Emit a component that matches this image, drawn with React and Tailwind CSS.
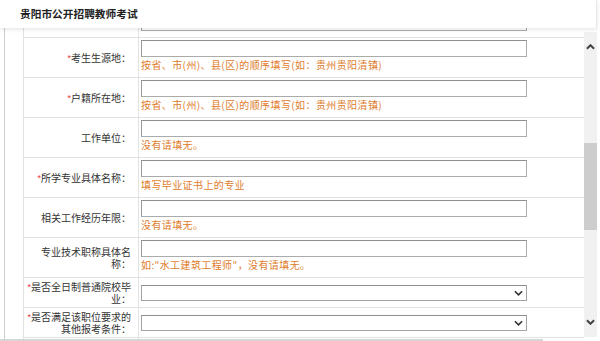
import React from 'react';

const hintArea = '按省、市(州)、县(区)的顺序填写(如：贵州贵阳清镇)';

const rows = [
  { label: '考生生源地：', req: true, hint: hintArea },
  { label: '户籍所在地：', req: true, hint: hintArea },
  { label: '工作单位：', hint: '没有请填无。' },
  { label: '所学专业具体名称：', req: true, hint: '填写毕业证书上的专业' },
  { label: '相关工作经历年限：', hint: '没有请填无。' },
  { label: '专业技术职称具体名称：', hint: '如:"水工建筑工程师"，没有请填无。' },
  { label: '是否全日制普通院校毕业：', req: true, select: true },
  { label: '是否满足该职位要求的其他报考条件：', req: true, select: true },
];

const Chevron = ({ up, className, sw = 1.6 }) => (
  <svg viewBox="0 0 10 6" className={className} fill="none" stroke="currentColor" strokeWidth={sw}>
    <path d={up ? 'M1 5 L5 1 L9 5' : 'M1 1 L5 5 L9 1'} />
  </svg>
);

const TextBox = () => (
  <div className="w-[386px] h-[17px] bg-white border border-[#ababab] border-t-[#8f8f8f] border-l-[#9a9a9a]" />
);

const SelectBox = () => (
  <div className="relative w-[386px] h-[16px] bg-white border border-[#a3a3a3] border-t-[#8f8f8f]">
    <Chevron sw={1.8} className="absolute right-[3px] top-[4px] w-[9px] h-[6px] text-[#333]" />
  </div>
);

const Row = ({ label, req, hint, select }) => (
  <div className={`flex border-b border-[#e2e2e2] ${select ? 'h-[30px]' : 'h-[40px]'}`}>
    <div className="w-[115px] shrink-0 border-r border-[#e2e2e2] flex items-center justify-end pr-[7px] pl-[1px]">
      <div className="text-right text-[10px] leading-[12px] text-[#333]">
        {req && <span className="text-[#e53333] font-['Liberation_Sans'] text-[9px] align-top">*</span>}
        {label}
      </div>
    </div>
    <div className={`flex-1 pl-[2px] flex flex-col ${select || !hint ? 'justify-center' : 'pt-[2px]'}`}>
      {select ? <SelectBox /> : <TextBox />}
      {hint && (
        <div className="mt-[1px] text-[10px] leading-[14px] tracking-[0.4px] text-[#e07c2c] whitespace-nowrap">{hint}</div>
      )}
    </div>
  </div>
);

export default function App() {
  return (
    <div className="w-[600px] h-[341px] bg-white overflow-hidden relative font-['Noto_Sans_CJK_SC',sans-serif]">
      <div className="relative z-10 h-[28px] flex items-center pl-[20px] bg-white shadow-[0_2px_4px_rgba(0,0,0,0.09)] border-r border-[#e6e6e6] mr-[3px]">
        <span className="text-[10.7px] font-bold text-[#222]">贵阳市公开招聘教师考试</span>
      </div>
      <div className="flex h-[311px] ml-[4px] border-l border-[#cfcfcf]">
        <div className="pl-[18px] overflow-hidden">
          <div className="w-[561px] border-l border-[#e2e2e2] mt-[-20px]">
            <div className="flex border-b border-[#e2e2e2] h-[30px]">
              <div className="w-[115px] shrink-0 border-r border-[#e2e2e2]" />
              <div className="flex-1 pl-[2px] flex items-center">
                <TextBox />
              </div>
            </div>
            {rows.map((r) => (
              <Row key={r.label} {...r} />
            ))}
            <div className="flex h-[30px]">
              <div className="w-[115px] shrink-0 border-r border-[#e2e2e2]" />
              <div className="flex-1" />
            </div>
          </div>
        </div>
        <div className="w-[13px] mt-[4px] h-[305px] bg-[#f1f1f1] flex flex-col">
          <div className="h-[30px] flex items-center justify-center text-[#444]">
            <Chevron up sw={2.2} className="w-[9px] h-[6px]" />
          </div>
          <div className="mt-[81px] h-[87px] bg-[#cdcdcd]" />
          <div className="flex-1" />
          <div className="h-[30px] flex items-center justify-center text-[#444]">
            <Chevron sw={2.2} className="w-[9px] h-[6px]" />
          </div>
        </div>
      </div>
      <div className="h-[2px] w-[543px] bg-[#d6d6d6]" />
    </div>
  );
}
